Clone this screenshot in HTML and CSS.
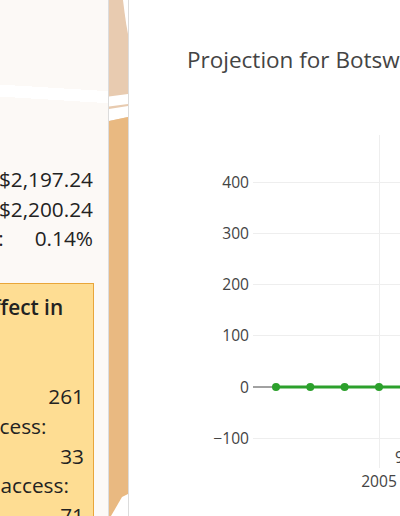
FILE: index.html
```html
<!DOCTYPE html>
<html lang="en">
<head>
    <meta charset="UTF-8">
    <meta name="viewport" content="width=device-width, initial-scale=1.0">
    <title>Projection for Botswana</title>
    <link rel="stylesheet" href="styles.css">
</head>
<body>
    <div class="page">
        <aside class="sidebar">
            <div class="stats">
                <div class="stat-row"><span>Current spending:</span><span>$2,197.24</span></div>
                <div class="stat-row"><span>New spending:</span><span>$2,200.24</span></div>
                <div class="stat-row"><span>Change in spending per capita:</span><span>0.14%</span></div>
            </div>

            <div class="effect-box">
                <h3 class="effect-title">Projected effect in<br>2030:</h3>
                <p class="effect-label">Lives lost:</p>
                <p class="effect-value">261</p>
                <p class="effect-label">Electricity access:</p>
                <p class="effect-value">33</p>
                <p class="effect-label">Clean water access:</p>
                <p class="effect-value">71</p>
            </div>
        </aside>

        <div class="backdrop">
            <svg width="19" height="516" viewBox="0 0 19 516">
                <rect x="0" y="0" width="19" height="130" fill="#e8cbb0"/>
                <path d="M14 0 L19 0 L19 34 Q17 24 15.5 12 Z" fill="#fff"/>
                <path d="M0 96.5 L19 94 L19 104 L0 106.5 Z" fill="#fff"/>
                <path d="M0 109 L19 106 L19 117 L0 121 Z" fill="#fff"/>
                <path d="M0 121 L19 117 L19 516 L0 516 Z" fill="#e9b981"/>
                <path d="M13 497 L19 494 L19 516 L2 516 Z" fill="#fff"/>
            </svg>
        </div>

        <main class="chart-panel">
            <svg class="chart" width="271" height="516" viewBox="0 0 271 516">
                <text class="chart-title" x="58" y="67.5">Projection for Botswana</text>

                <g class="grid">
                    <line x1="124" x2="271" y1="182.5" y2="182.5"/>
                    <line x1="124" x2="271" y1="233.5" y2="233.5"/>
                    <line x1="124" x2="271" y1="284.5" y2="284.5"/>
                    <line x1="124" x2="271" y1="335.5" y2="335.5"/>
                    <line x1="124" x2="271" y1="438.5" y2="438.5"/>
                    <line x1="250.5" x2="250.5" y1="135" y2="468"/>
                </g>
                <line class="zeroline" x1="124" x2="271" y1="387" y2="387"/>

                <g class="ytick">
                    <text x="120" y="188.3">400</text>
                    <text x="120" y="239.3">300</text>
                    <text x="120" y="290.3">200</text>
                    <text x="120" y="341.3">100</text>
                    <text x="120" y="392.6">0</text>
                    <text x="120" y="444">&minus;100</text>
                </g>

                <line class="trace" x1="147" x2="271" y1="387" y2="387"/>
                <g class="points">
                    <circle cx="147" cy="387" r="4"/>
                    <circle cx="181.3" cy="387" r="4"/>
                    <circle cx="215.6" cy="387" r="4"/>
                    <circle cx="250" cy="387" r="4"/>
                    <circle cx="284.3" cy="387" r="4"/>
                </g>

                <text class="xtick" x="250" y="487">2005</text>
                <text class="note" x="266" y="463">9</text>
            </svg>
        </main>
    </div>
</body>
</html>
```

FILE: styles.css
```css
body {
    margin: 0;
    font-family: "Open Sans", "Liberation Sans", sans-serif;
    color: #222;
    overflow: hidden;
}

.page {
    display: flex;
    height: 516px;
}

.sidebar {
    width: 109px;
    flex-shrink: 0;
    box-sizing: border-box;
    padding: 165px 14px 0 0;
    display: flex;
    flex-direction: column;
    align-items: flex-end;
    overflow: hidden;
    border-right: 1px solid #dcdcdc;
    background: linear-gradient(183.5deg, #fcf9f6 0, #fcf9f6 91px, #fff 91px, #fff 103px, #fcf9f6 103px);
    font-size: 20.8px;
    line-height: 29.7px;
}

.stats {
    width: max-content;
    margin-right: 1px;
    white-space: nowrap;
}

.stat-row {
    display: flex;
    justify-content: space-between;
    gap: 31px;
}

.effect-box {
    width: 227px;
    flex-shrink: 0;
    box-sizing: border-box;
    margin-top: 29px;
    padding: 9px 9px 20px 12px;
    background-color: #fedd93;
    border: 1px solid #e9a63a;
    white-space: nowrap;
}

.effect-title {
    margin: 0;
    font-size: 20.8px;
    font-weight: 600;
}

.effect-label,
.effect-value {
    margin: 0;
}

.effect-value {
    text-align: right;
}

.backdrop {
    width: 19px;
    flex-shrink: 0;
}

.backdrop svg {
    display: block;
}

.chart-panel {
    flex: 1;
    border-left: 1px solid #dcdcdc;
    background-color: #fff;
    overflow: hidden;
}

.chart {
    display: block;
    font-family: "Open Sans", "Liberation Sans", sans-serif;
}

.chart-title {
    font-size: 22.5px;
    fill: #444;
}

.grid line {
    stroke: #eee;
    stroke-width: 1;
}

.zeroline {
    stroke: #444;
    stroke-width: 1;
}

.ytick text {
    font-size: 15.6px;
    fill: #444;
    text-anchor: end;
}

.trace {
    stroke: #2ca02c;
    stroke-width: 3;
}

.points circle {
    fill: #2ca02c;
}

.xtick {
    font-size: 15.6px;
    fill: #444;
    text-anchor: middle;
}

.note {
    font-size: 15.6px;
    fill: #444;
}
```
